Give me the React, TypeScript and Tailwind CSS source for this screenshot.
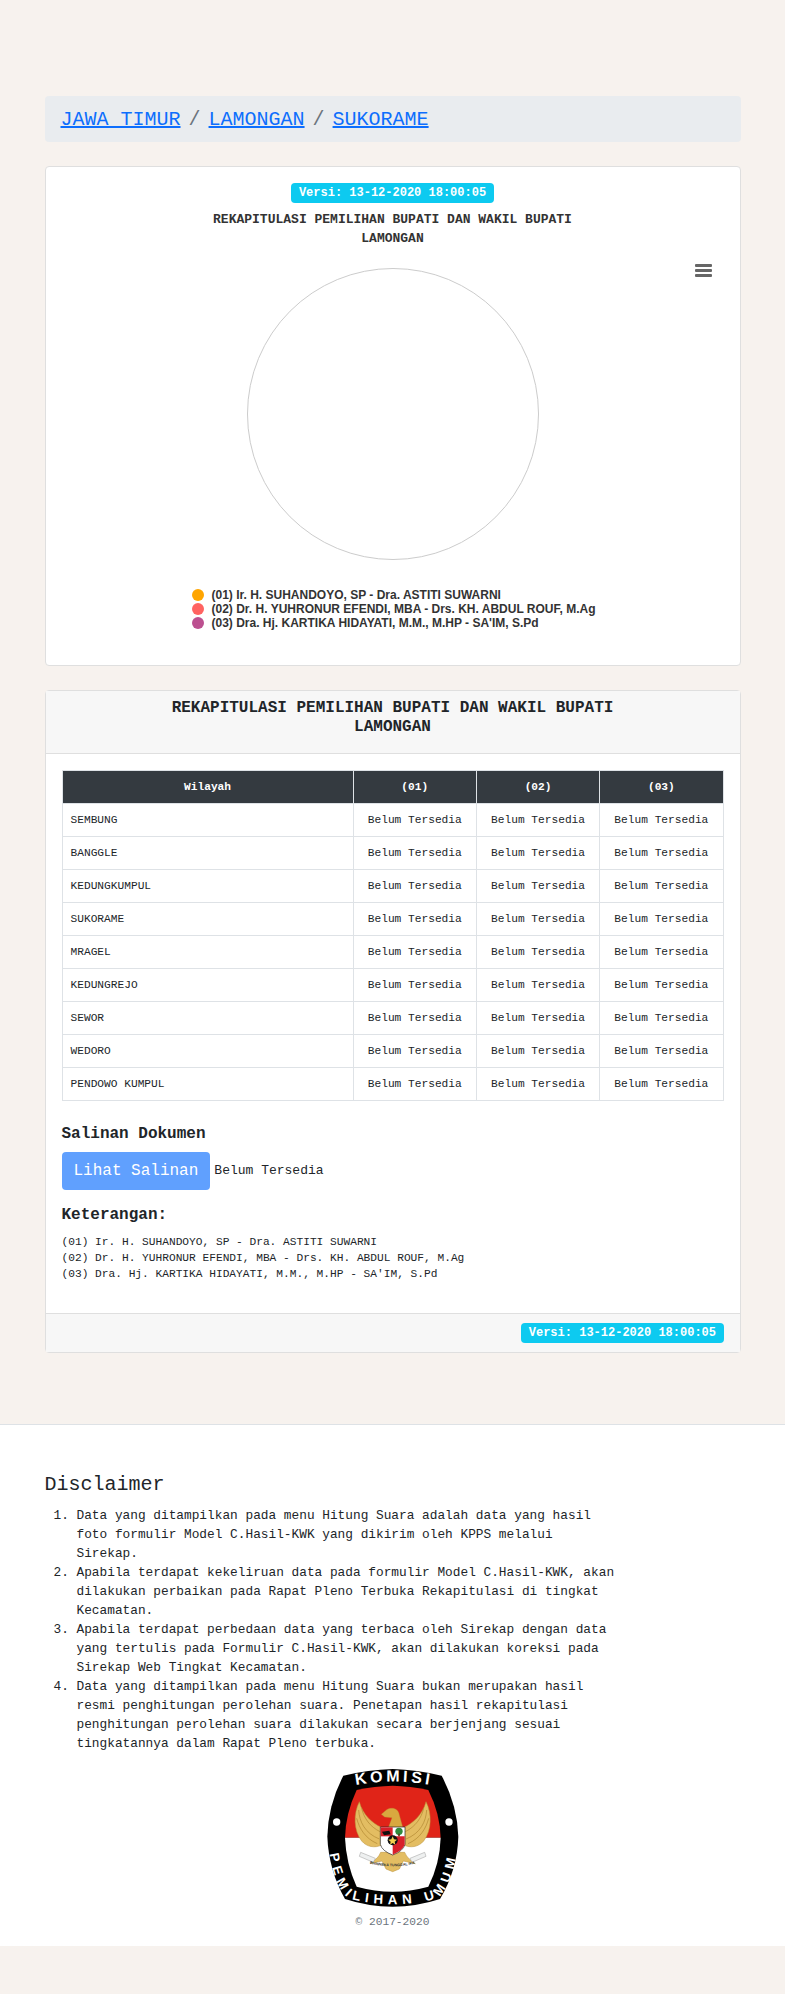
import React from 'react';

const MONO = 'font-["Liberation_Mono",monospace]';

const wilayah = ['SEMBUNG', 'BANGGLE', 'KEDUNGKUMPUL', 'SUKORAME', 'MRAGEL', 'KEDUNGREJO', 'SEWOR', 'WEDORO', 'PENDOWO KUMPUL'];

const paslon = [
  { dot: 'bg-[#ffa500]', name: '(01) Ir. H. SUHANDOYO, SP - Dra. ASTITI SUWARNI' },
  { dot: 'bg-[#ff6361]', name: '(02) Dr. H. YUHRONUR EFENDI, MBA - Drs. KH. ABDUL ROUF, M.Ag' },
  { dot: 'bg-[#bc5090]', name: "(03) Dra. Hj. KARTIKA HIDAYATI, M.M., M.HP - SA'IM, S.Pd" },
];

const disclaimer = [
  'Data yang ditampilkan pada menu Hitung Suara adalah data yang hasil foto formulir Model C.Hasil-KWK yang dikirim oleh KPPS melalui Sirekap.',
  'Apabila terdapat kekeliruan data pada formulir Model C.Hasil-KWK, akan dilakukan perbaikan pada Rapat Pleno Terbuka Rekapitulasi di tingkat Kecamatan.',
  'Apabila terdapat perbedaan data yang terbaca oleh Sirekap dengan data yang tertulis pada Formulir C.Hasil-KWK, akan dilakukan koreksi pada Sirekap Web Tingkat Kecamatan.',
  'Data yang ditampilkan pada menu Hitung Suara bukan merupakan hasil resmi penghitungan perolehan suara. Penetapan hasil rekapitulasi penghitungan perolehan suara dilakukan secara berjenjang sesuai tingkatannya dalam Rapat Pleno terbuka.',
];

function Badge() {
  return (
    <span className="inline-block rounded-[4px] bg-[#0dcaf0] px-2 py-1 text-[12px] leading-[12px] font-bold text-white">
      Versi: 13-12-2020 18:00:05
    </span>
  );
}

function Wing() {
  return (
    <g>
      <path d="M118 110 C100 145 100 195 125 228 C140 246 165 250 185 240 L182 186 C160 176 128 150 118 110Z" fill="#e3bd62" stroke="#b98f35" strokeWidth="1.5" />
      <path d="M116 135 C118 170 135 205 178 222 M110 160 C118 190 135 220 172 236 M125 130 C132 160 150 185 180 200" fill="none" stroke="#b08631" strokeWidth="2" />
    </g>
  );
}

function Logo() {
  return (
    <svg viewBox="0 0 438 438" width="146" height="146" className="block">
      <defs>
        <path id="komisi-arc" d="M100 62 Q218 38 344 62" />
        <path id="pemilu-arc" d="M24 222 C32 320 53 372 83 398 C150 424 290 424 354 398 C384 372 406 320 416 222" />
        <path id="motto-arc" d="M150 296 Q218 312 284 296" />
      </defs>
      <path d="M218 12 Q145 14 70 32 Q24 120 22 215 Q26 315 75 402 Q145 425 218 425 Q290 425 360 402 Q412 315 415 215 Q412 120 365 32 Q290 14 218 12Z" fill="#000" />
      <path d="M218 62 Q165 63 110 75 Q77 145 75 218 L362 218 Q360 145 325 75 Q270 63 218 62Z" fill="#e02418" />
      <path d="M75 218 Q78 295 110 365 Q165 380 218 380 Q270 380 325 365 Q360 295 362 218Z" fill="#fff" />
      <circle cx="50" cy="171" r="11" fill="#fff" />
      <circle cx="387" cy="171" r="11" fill="#fff" />
      <text fill="#fff" fontFamily="Liberation Sans, sans-serif" fontWeight="700" fontSize="48" letterSpacing="10">
        <textPath href="#komisi-arc" startOffset="50%" textAnchor="middle">KOMISI</textPath>
      </text>
      <text fill="#fff" fontFamily="Liberation Sans, sans-serif" fontWeight="700" fontSize="40" letterSpacing="15">
        <textPath href="#pemilu-arc" startOffset="50%" textAnchor="middle">PEMILIHAN UMUM</textPath>
      </text>
      {/* garuda */}
      <Wing />
      <g transform="translate(436 0) scale(-1 1)">
        <Wing />
      </g>
      <path d="M184 148 L200 134 C218 124 236 132 238 150 L248 186 L206 186 L216 158 L194 156Z" fill="#d9a83f" stroke="#b98f35" strokeWidth="1" />
      <path d="M182 262 C176 278 162 288 150 296 L186 288 L198 312 L218 320 L238 312 L250 288 L286 296 C274 288 260 278 254 262Z" fill="#e3bd62" stroke="#b98f35" strokeWidth="1.5" />
      <path d="M122 262 L166 280 L160 292 L118 274Z" fill="#eef0f0" stroke="#9a9a9a" strokeWidth="1.5" />
      <path d="M314 262 L270 280 L276 292 L318 274Z" fill="#eef0f0" stroke="#9a9a9a" strokeWidth="1.5" />
      <path d="M181 186 H255 V238 Q250 258 218 270 Q186 258 181 238Z" fill="#fff" stroke="#222" strokeWidth="2" />
      <rect x="182" y="187" width="36" height="27" fill="#d8202a" />
      <path d="M218 214 H254 V238 Q250 256 218 269Z" fill="#d8202a" />
      <circle cx="237" cy="199" r="11" fill="#2f8a3c" />
      <rect x="234.5" y="206" width="5" height="8" fill="#5a3a1a" />
      <path d="M186 200 L208 197 L212 208 L192 211Z" fill="#111" />
      <circle cx="218" cy="226" r="15" fill="#111" />
      <path d="M218 214 L222 223 L231 224 L224 230 L226 239 L218 234 L210 239 L212 230 L205 224 L214 223Z" fill="#f4d14f" />
      <text fill="#333" fontFamily="Liberation Sans, sans-serif" fontSize="11" fontWeight="700">
        <textPath href="#motto-arc" startOffset="50%" textAnchor="middle">BHINNEKA TUNGGAL IKA</textPath>
      </text>
    </svg>
  );
}

export default function App() {
  return (
    <div className={`${MONO} min-h-[1994px] bg-[#f7f2ee] text-[#212529]`}>
      <div className="mx-auto w-[720px] px-3 pt-[96px]">
        <nav className="mb-6 flex h-[46px] items-center gap-2 rounded-[4px] bg-[#e9ecef] px-4 pt-px text-[20px]">
          <a className="text-[#0d6efd] underline">JAWA TIMUR</a>
          <span className="text-[#6c757d]">/</span>
          <a className="text-[#0d6efd] underline">LAMONGAN</a>
          <span className="text-[#6c757d]">/</span>
          <a className="text-[#0d6efd] underline">SUKORAME</a>
        </nav>

        <section className="relative mb-6 h-[500px] rounded-[4px] border border-[#dfdfdf] bg-white pt-4 text-center">
          <div className="flex h-[20px] justify-center">
            <Badge />
          </div>
          <h2 className="mx-auto mt-[7px] text-[13px] leading-[19px] font-bold text-[#333]">
            REKAPITULASI PEMILIHAN BUPATI DAN WAKIL BUPATI
            <br />
            LAMONGAN
          </h2>
          <div className="absolute top-[97px] right-[28px] flex w-[17px] flex-col gap-[2px]">
            <span className="h-[3px] rounded-[1px] bg-[#666]" />
            <span className="h-[3px] rounded-[1px] bg-[#666]" />
            <span className="h-[3px] rounded-[1px] bg-[#666]" />
          </div>
          <svg width="292" height="292" viewBox="0 0 292 292" className="mx-auto mt-[20px] block">
            <circle cx="146" cy="146" r="145.5" fill="#fff" stroke="#cccccc" />
          </svg>
          <ul className="mt-[28px] ml-[146px] text-left font-['Liberation_Sans',sans-serif] text-[12px] leading-[14px] font-bold text-[#333]">
            {paslon.map((p) => (
              <li key={p.name} className="flex items-center gap-2">
                <span className={`h-3 w-3 rounded-full ${p.dot}`} />
                {p.name}
              </li>
            ))}
          </ul>
        </section>

        <section className="rounded-[4px] border border-[#dfdfdf] bg-white">
          <header className="h-[63px] border-b border-[#dfdfdf] bg-[#f7f7f7] pt-2 text-center text-[16px] leading-[19px] font-bold">
            REKAPITULASI PEMILIHAN BUPATI DAN WAKIL BUPATI
            <br />
            LAMONGAN
          </header>
          <div className="h-[559px] px-4 pt-4">
            <table className="w-full table-fixed border-collapse text-[11.2px] leading-[16px]">
              <thead>
                <tr className="h-[33px] bg-[#343a40] text-white">
                  <th className="border border-[#dee2e6] font-bold">Wilayah</th>
                  <th className="w-[123.3px] border border-[#dee2e6] font-bold">(01)</th>
                  <th className="w-[123.3px] border border-[#dee2e6] font-bold">(02)</th>
                  <th className="w-[123.3px] border border-[#dee2e6] font-bold">(03)</th>
                </tr>
              </thead>
              <tbody>
                {wilayah.map((w) => (
                  <tr key={w} className="h-[33px]">
                    <td className="border border-[#dee2e6] px-2">{w}</td>
                    <td className="border border-[#dee2e6] text-center">Belum Tersedia</td>
                    <td className="border border-[#dee2e6] text-center">Belum Tersedia</td>
                    <td className="border border-[#dee2e6] text-center">Belum Tersedia</td>
                  </tr>
                ))}
              </tbody>
            </table>

            <h3 className="mt-[24px] text-[16px] leading-[19px] font-bold">Salinan Dokumen</h3>
            <div className="mt-[8px] flex items-center gap-1">
              <button className="h-[38px] rounded-[4px] bg-[#60a0fe] px-3 text-[16px] text-white">Lihat Salinan</button>
              <span className="text-[13px]">Belum Tersedia</span>
            </div>
            <h3 className="mt-[16px] text-[16px] leading-[19px] font-bold">Keterangan:</h3>
            <ul className="mt-[9px] text-[11.2px] leading-[16px]">
              {paslon.map((p) => (
                <li key={p.name}>{p.name}</li>
              ))}
            </ul>
          </div>
          <footer className="flex h-[39px] items-center justify-end border-t border-[#dfdfdf] bg-[#f7f7f7] pr-[15.5px]">
            <Badge />
          </footer>
        </section>
      </div>

      <div className="mt-[71px] h-[522px] border-t border-[#dee2e6] bg-white">
        <div className="mx-auto w-[720px] px-3 pt-[48px]">
          <h4 className="text-[20px] leading-[24px]">Disclaimer</h4>
          <ol className="mt-[9px] w-[576px] list-decimal pl-8 text-[12.8px] leading-[19px]">
            {disclaimer.map((d) => (
              <li key={d}>{d}</li>
            ))}
          </ol>
          <div className="mt-[12px] flex flex-col items-center">
            <Logo />
            <p className="mt-[3px] text-[11.2px] leading-[16px] text-[#6c757d]">© 2017-2020</p>
          </div>
        </div>
      </div>
    </div>
  );
}
